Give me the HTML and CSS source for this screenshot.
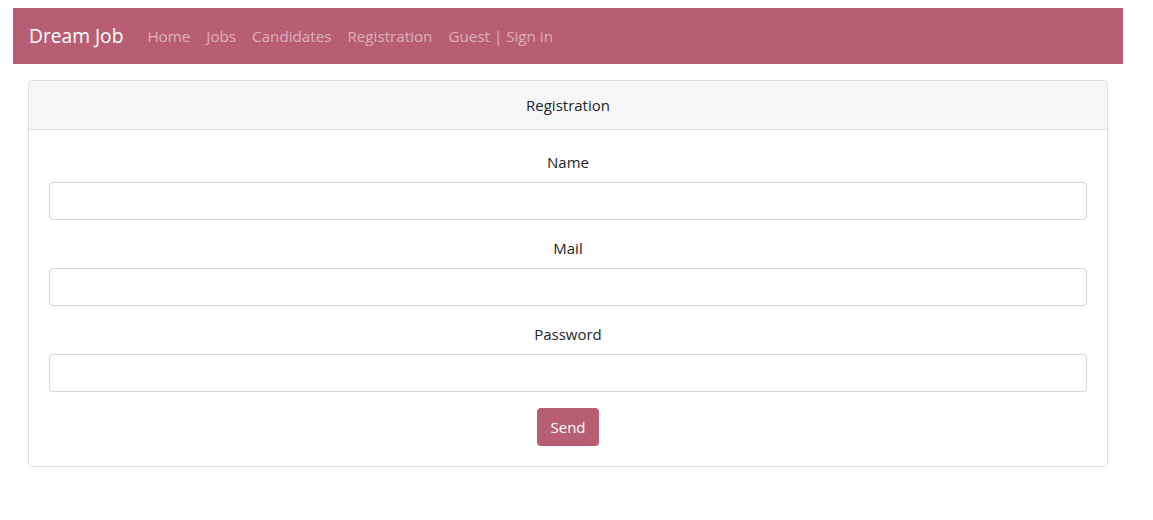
FILE: index.html
```html
<!DOCTYPE html>
<html lang="en">
<head>
<meta charset="utf-8">
<title>Dream Job</title>
<link rel="stylesheet" href="styles.css">
</head>
<body>
<nav class="navbar">
  <a class="brand" href="#">Dream Job</a>
  <div class="nav-links">
    <a class="nav-link" href="#">Home</a>
    <a class="nav-link" href="#">Jobs</a>
    <a class="nav-link" href="#">Candidates</a>
    <a class="nav-link" href="#">Registration</a>
    <a class="nav-link" href="#">Guest | Sign in</a>
  </div>
</nav>
<div class="container">
  <div class="card">
    <div class="card-header">Registration</div>
    <form class="card-body">
      <div class="form-group">
        <label class="label" for="name">Name</label>
        <input class="input" id="name" type="text">
      </div>
      <div class="form-group">
        <label class="label" for="mail">Mail</label>
        <input class="input" id="mail" type="text">
      </div>
      <div class="form-group">
        <label class="label" for="password">Password</label>
        <input class="input" id="password" type="password">
      </div>
      <div class="actions">
        <button class="btn" type="button">Send</button>
      </div>
    </form>
  </div>
</div>
</body>
</html>
```
FILE: styles.css
```css
* { box-sizing: border-box; }
body {
  margin: 8px;
  font-family: "Open Sans", "Noto Sans", sans-serif;
  font-size: 15px;
  line-height: 24px;
  color: #212529;
  background: #fff;
}
.navbar {
  display: flex;
  align-items: center;
  margin-left: 5px;
  width: 1110px;
  height: 56px;
  padding: 0 16px;
  background: #b85e72;
}
.brand {
  color: #fff;
  font-size: 19.2px;
  text-decoration: none;
  margin-right: 16px;
  line-height: 30px;
}
.nav-links { display: flex; }
.nav-link {
  color: rgba(255, 255, 255, 0.5);
  text-decoration: none;
  font-size: 15.2px;
  padding: 8px;
}
.container {
  margin: 16px 0 0 5px;
  width: 1110px;
  padding: 0 15px;
}
.card {
  border: 1px solid #dfdfdf;
  border-radius: 4px;
}
.card-header {
  background: #f7f7f7;
  border-bottom: 1px solid #dfdfdf;
  padding: 12px 20px;
  text-align: center;
  border-radius: 3px 3px 0 0;
}
.card-body {
  margin: 0;
  padding: 20px;
  text-align: center;
}
.form-group { margin-bottom: 16px; }
.label {
  display: block;
  margin-bottom: 8px;
}
.input {
  display: block;
  width: 100%;
  height: 38px;
  border: 1px solid #ced4da;
  border-radius: 4px;
  padding: 6px 12px;
  font: inherit;
}
.actions { display: flex; justify-content: center; }
.btn {
  height: 38px;
  padding: 6px 13px;
  background: #b85e72;
  color: #fff;
  border: none;
  border-radius: 4px;
  font: inherit;
}
```
